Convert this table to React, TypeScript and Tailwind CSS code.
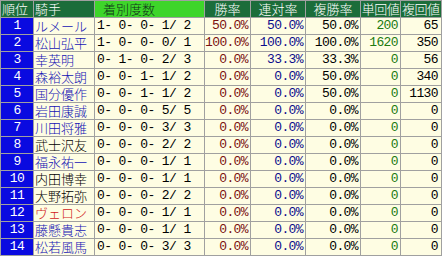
const rows = [
  { rank: 1, name: "ルメール", c: "1- 0- 0- 1/ 2", win: "50.0%", ren: "50.0%", fuku: "50.0%", tan: "200", fk: "65", nc: "text-[#1414b4]" },
  { rank: 2, name: "松山弘平", c: "1- 0- 0- 0/ 1", win: "100.0%", ren: "100.0%", fuku: "100.0%", tan: "1620", fk: "350", nc: "text-[#1414b4]" },
  { rank: 3, name: "幸英明", c: "0- 1- 0- 2/ 3", win: "0.0%", ren: "33.3%", fuku: "33.3%", tan: "0", fk: "56", nc: "text-[#1414b4]" },
  { rank: 4, name: "森裕太朗", c: "0- 0- 1- 1/ 2", win: "0.0%", ren: "0.0%", fuku: "50.0%", tan: "0", fk: "340", nc: "text-[#1414b4]" },
  { rank: 5, name: "国分優作", c: "0- 0- 1- 1/ 2", win: "0.0%", ren: "0.0%", fuku: "50.0%", tan: "0", fk: "1130", nc: "text-[#1414b4]" },
  { rank: 6, name: "岩田康誠", c: "0- 0- 0- 5/ 5", win: "0.0%", ren: "0.0%", fuku: "0.0%", tan: "0", fk: "0", nc: "text-[#1414b4]" },
  { rank: 7, name: "川田将雅", c: "0- 0- 0- 3/ 3", win: "0.0%", ren: "0.0%", fuku: "0.0%", tan: "0", fk: "0", nc: "text-[#1414b4]" },
  { rank: 8, name: "武士沢友", c: "0- 0- 0- 2/ 2", win: "0.0%", ren: "0.0%", fuku: "0.0%", tan: "0", fk: "0", nc: "text-black" },
  { rank: 9, name: "福永祐一", c: "0- 0- 0- 1/ 1", win: "0.0%", ren: "0.0%", fuku: "0.0%", tan: "0", fk: "0", nc: "text-[#1414b4]" },
  { rank: 10, name: "内田博幸", c: "0- 0- 0- 1/ 1", win: "0.0%", ren: "0.0%", fuku: "0.0%", tan: "0", fk: "0", nc: "text-black" },
  { rank: 11, name: "大野拓弥", c: "0- 0- 0- 2/ 2", win: "0.0%", ren: "0.0%", fuku: "0.0%", tan: "0", fk: "0", nc: "text-black" },
  { rank: 12, name: "ヴェロン", c: "0- 0- 0- 1/ 1", win: "0.0%", ren: "0.0%", fuku: "0.0%", tan: "0", fk: "0", nc: "text-[#d01818]" },
  { rank: 13, name: "藤懸貴志", c: "0- 0- 0- 1/ 1", win: "0.0%", ren: "0.0%", fuku: "0.0%", tan: "0", fk: "0", nc: "text-[#1414b4]" },
  { rank: 14, name: "松若風馬", c: "0- 0- 0- 3/ 3", win: "0.0%", ren: "0.0%", fuku: "0.0%", tan: "0", fk: "0", nc: "text-[#1414b4]" },
]

const jp = "font-['Noto_Sans_CJK_JP',sans-serif] text-[13px] font-light whitespace-nowrap"
const num = "font-['Liberation_Mono',monospace] text-[13px] tracking-[-0.6px] whitespace-pre"
const cell = "border border-[#a0a0a0] h-[16px] p-0 leading-[16px] overflow-hidden"
const head = "bg-[#1b6d3a] font-light text-center"

export default function App() {
  return (
    <div className="w-[442px] h-[257px] bg-white overflow-hidden">
      <table className="table-fixed border-collapse w-[441px]">
        <colgroup>
          <col className="w-[33px]" />
          <col className="w-[61px]" />
          <col className="w-[110px]" />
          <col className="w-[46px]" />
          <col className="w-[55px]" />
          <col className="w-[55px]" />
          <col className="w-[40px]" />
          <col className="w-[41px]" />
        </colgroup>
        <thead>
          <tr className="text-white">
            <th className={`${cell} ${jp} bg-[#1b6d3a] text-left pl-[1px]`}>順位</th>
            <th className={`${cell} ${jp} bg-[#1b6d3a] text-left pl-[1px]`}>騎手</th>
            <th className={`${cell} ${jp} bg-[#3ed52a] text-[#10301a] text-left pl-[8px]`}>着別度数</th>
            <th className={`${cell} ${jp} ${head}`}>勝率</th>
            <th className={`${cell} ${jp} ${head}`}>連対率</th>
            <th className={`${cell} ${jp} ${head}`}>複勝率</th>
            <th className={`${cell} ${jp} ${head} tracking-[-0.5px]`}>単回値</th>
            <th className={`${cell} ${jp} ${head} tracking-[-0.5px] text-left pl-[1px]`}>複回値</th>
          </tr>
        </thead>
        <tbody>
          {rows.map((r) => (
            <tr key={r.rank} className="bg-[#fefde3]">
              <td className={`${cell} ${num} bg-[#0a0ae0] text-white text-center`}>{r.rank}</td>
              <td className={`${cell} ${jp} ${r.nc} pl-[1px]`}>{r.name}</td>
              <td className={`${cell} ${num} text-black pl-[2px]`}>{r.c}</td>
              <td className={`${cell} ${num} text-[#7a1010] text-right pr-[2px]`}>{r.win}</td>
              <td className={`${cell} ${num} text-[#0c0c8c] text-right pr-[2px]`}>{r.ren}</td>
              <td className={`${cell} ${num} text-black text-right pr-[2px]`}>{r.fuku}</td>
              <td className={`${cell} ${num} text-[#207a10] text-right pr-[2px]`}>{r.tan}</td>
              <td className={`${cell} ${num} text-black text-right pr-[3px]`}>{r.fk}</td>
            </tr>
          ))}
        </tbody>
      </table>
    </div>
  )
}
